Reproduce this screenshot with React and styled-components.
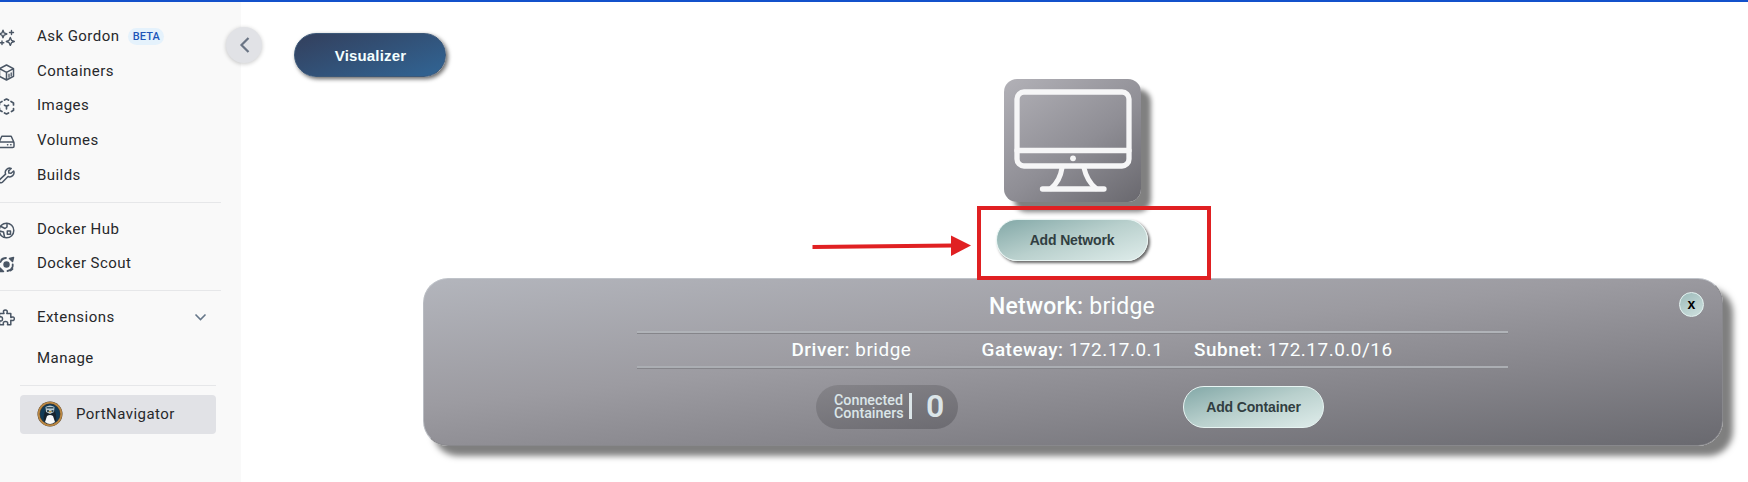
import React from "react";
import styled, { createGlobalStyle, css } from "styled-components";

const Global = createGlobalStyle`
  *, *::before, *::after { box-sizing: border-box; }
  body { margin: 0; background: #fff; font-family: Roboto, "Liberation Sans", sans-serif; overflow: hidden; }
`;

const Page = styled.div`
  height: 482px;
  display: flex;
  flex-direction: column;
  position: relative;
`;
const TopBar = styled.div`
  height: 2px;
  flex: none;
  background: #1351cb;
`;
const Body = styled.div`
  flex: 1;
  display: flex;
  min-height: 0;
`;
const Sidebar = styled.nav`
  width: 241px;
  flex: none;
  position: relative;
  background: #f9f9f9;
  padding-top: 17px;
`;
const Item = styled.div`
  height: ${(p) => p.$h || 34.6}px;
  display: flex;
  align-items: center;
  color: #27282b;
  font-size: 15px;
  letter-spacing: 0.45px;
  white-space: nowrap;
`;
const IconSlot = styled.span`
  width: 37px;
  height: 17px;
  flex: none;
  overflow: hidden;
  margin-top: 2px;
  svg { display: block; margin-left: -2px; }
`;
const Beta = styled.span`
  margin-left: 9px;
  width: 36px;
  height: 17px;
  border-radius: 9px;
  background: #e5f2fc;
  color: #2055b8;
  font-size: 11px;
  font-weight: 500;
  letter-spacing: 0.1px;
  line-height: 17px;
  text-align: center;
`;
const Divider = styled.div`
  height: 1px;
  background: #e6e7e9;
  margin: ${(p) => p.$margin};
`;
const Chevron = styled.svg`
  margin-left: auto;
  margin-right: 33px;
`;
const Extension = styled.div`
  margin: 9px 25px 0 20px;
  height: 39px;
  border-radius: 4px;
  background: #e1e2e6;
  display: flex;
  align-items: center;
  gap: 13px;
  padding: 0 0 1px 17px;
  font-size: 15px;
  letter-spacing: 0.45px;
  color: #27282b;
`;
const Collapse = styled.button`
  position: absolute;
  left: 226px;
  top: 27px;
  width: 36px;
  height: 36px;
  border: 0;
  padding: 0 0 1px 1px;
  border-radius: 50%;
  background: #e1e2e6;
  box-shadow: 0 1px 4px rgba(0, 0, 0, 0.22);
  display: flex;
  align-items: center;
  justify-content: center;
`;
const Main = styled.main`
  flex: 1;
  min-width: 0;
  display: flex;
  flex-direction: column;
  padding: 31px 25px 0 53px;
`;
const pill = css`
  display: flex;
  align-items: center;
  justify-content: center;
  padding: 0;
  font-family: "Liberation Sans", Arial, sans-serif;
  font-weight: 700;
`;
const VisualizerButton = styled.button`
  ${pill}
  width: 152px;
  height: 44px;
  flex: none;
  border: 1px solid #3c5878;
  border-radius: 22px;
  background: linear-gradient(160deg, #33415f 5%, #31618f 90%);
  box-shadow: 2px 2px 4px rgba(0, 0, 0, 0.6);
  color: #f4ffff;
  font-size: 15px;
  letter-spacing: 0.15px;
  padding: 1px 0 0 1px;
`;
const Board = styled.section`
  margin-left: 129px;
  margin-top: 2px;
  display: flex;
  flex-direction: column;
  align-items: center;
`;
const Host = styled.div`
  width: 137px;
  height: 123px;
  margin-right: 2px;
  border-radius: 13px;
  background: linear-gradient(145deg, #b2b1b7 0%, #8f8e95 55%, #69686e 100%);
  box-shadow: 10px 10px 5px #808080;
  svg { display: block; }
`;
const MintButton = styled.button`
  ${pill}
  width: ${(p) => p.$w}px;
  height: 42px;
  border: 1px solid #e8f5f3;
  border-radius: 21px;
  background: linear-gradient(163deg, #88acab 5%, #b9d0cd 50%, #d9e8e6 92%);
  color: #313e41;
  font-size: 14px;
  letter-spacing: -0.15px;
  box-shadow: ${(p) => (p.$raised ? "2px 2px 3px rgba(0,0,0,.6)" : "none")};
`;
const AddSlot = styled.div`
  padding: 17px 2px 17px 0;
`;
const NetworkCard = styled.article`
  position: relative;
  width: 1300px;
  height: 168px;
  padding-right: 2px;
  border-radius: 25px;
  border: 1px solid;
  border-color: #bfc3c9 #88888c #88888c #b9bcc2;
  background: linear-gradient(174deg, #b3b5bc 0%, #9c9ba1 42%, #87868c 67%, #69696f 100%);
  box-shadow: 10px 10px 6px #7f7f7f;
  color: #fbffff;
  display: flex;
  flex-direction: column;
  align-items: center;
`;
const Title = styled.h2`
  margin: 0;
  height: 52px;
  line-height: 56px;
  font-size: 23px;
  font-weight: 400;
  letter-spacing: 0.22px;
  b { font-weight: 500; }
`;
const Facts = styled.div`
  width: 871px;
  height: 37px;
  border-top: 2px solid #b0b3b8;
  border-bottom: 2px solid #abaeb3;
  box-shadow: 0 1px 0 #85858a, inset 0 1px 0 #85858a;
  display: flex;
  align-items: center;
  padding-left: 155px;
  font-size: 18.9px;
  letter-spacing: 0.53px;
  white-space: nowrap;
  b { font-weight: 500; }
`;
const Fact = styled.span`
  width: ${(p) => p.$w}px;
  flex: none;
`;
const Actions = styled.div`
  display: flex;
  align-items: center;
  gap: 225px;
  margin: 17px 4px 0 0;
`;
const Counter = styled.div`
  width: 142px;
  height: 44px;
  border-radius: 22px;
  background: linear-gradient(170deg, #858489, #6c6b71);
  color: #dbe5e8;
  display: flex;
  align-items: center;
  padding-left: 18px;
  font-weight: 500;
`;
const CounterLabel = styled.span`
  width: 75px;
  font-size: 14.3px;
  line-height: 13px;
  white-space: nowrap;
`;
const CounterBar = styled.span`
  width: 3px;
  height: 26px;
  background: #dbe5e8;
  margin-bottom: 3px;
`;
const CounterValue = styled.span`
  margin: 0 0 2px 14px;
  font-size: 32px;
  font-weight: 600;
  line-height: 42px;
`;
const Close = styled.button`
  ${pill}
  position: absolute;
  right: 18px;
  top: 13px;
  width: 25px;
  height: 25px;
  border: 1px solid #e4f4f2;
  border-radius: 50%;
  background: linear-gradient(150deg, #9dbbba, #cfe1df);
  color: #000;
  font-size: 14px;
  padding-bottom: 2px;
`;
const Highlight = styled.div`
  position: absolute;
  left: 977px;
  top: 206px;
  width: 234px;
  height: 74px;
  border: 4px solid #e02022;
`;
const Arrow = styled.svg`
  position: absolute;
  left: 808px;
  top: 232px;
`;

const Glyph = ({ children }) => (
  <svg width="17" height="17" viewBox="0 0 17 17" fill="none" stroke="#4a5665" strokeWidth="1.5" strokeLinejoin="round" strokeLinecap="round">{children}</svg>
);
const Sparkles = () => (
  <Glyph><path d="M5 1.200 6.100 3.900l2.700 1.100L6.100 6.100 5 8.800 3.900 6.100 1.200 5l2.700-1.100ZM12.300 8.500l1.200 2.800 2.800 1.200-2.800 1.200-1.200 2.800-1.200-2.800-2.800-1.200 2.800-1.200ZM13.500 1.500v4M11.500 3.500h4M4 12v3.500M2.200 13.700h3.600" strokeWidth="1.400" /></Glyph>
);
const Box = () => (
  <Glyph><path d="M8.500 1 15.500 4.700v7.600L8.500 16l-7-3.700V4.700ZM1.500 4.700l7 3.600 7-3.600M8.500 8.300V16" /><path d="M11 10.200v3M13.200 9v3" strokeWidth="1.300" /></Glyph>
);
const ImageGlyph = () => (
  <Glyph><path d="M6.500 2 8.500 1l2 1M13 3.500l2.500 1.400v2M15.500 10.500v1.800L13.500 13.500M10.500 15l-2 1-2-1M4 13.500l-2.500-1.200v-2M1.500 6.800V4.900L4 3.500M6.500 7.200l2 1.100 2-1.100M8.500 8.300v2.500" strokeWidth="1.700" /></Glyph>
);
const Drive = () => (
  <Glyph><path d="M1 9.500 3.800 3.200h9.400L16 9.500M2.300 9h12.400q1.300 0 1.300 1.300v2.900q0 1.300-1.300 1.300H2.300Q1 14.500 1 13.200v-2.900Q1 9 2.300 9ZM9.500 11.800h.3M12.700 11.800h.3" /></Glyph>
);
const Wrench = () => (
  <Glyph><path d="M13.200 1.500a4.300 4.300 0 0 0-5.600 5.600L1.700 12.600a1.900 1.900 0 0 0 2.700 2.700L10 9.500a4.300 4.300 0 0 0 5.700-5.500l-2.600 2.300-2.200-.2-.3-2.200Z" /></Glyph>
);
const Hub = () => (
  <Glyph><circle cx="8.500" cy="8.500" r="7.300" /><path d="M3 4.500 7 6.500 9 5V1.500M1.500 9l4 1 1 5M9.300 9h3.200v3.200H9.300Z" /></Glyph>
);
const Scout = () => (
  <Glyph><circle cx="8.500" cy="8.500" r="3.200" fill="#4a5665" stroke="none" /><path d="M8 2a6.500 6.500 0 0 0-5.500 4M9.500 15a6.500 6.500 0 0 0 5-4M14.700 8.300v2M3.500 3.500 5 2.500M12.500 14.500l2-1.500" strokeWidth="1.800" /><path d="m11.500 2.500 4-1-1 4ZM2 12v3.500h3.500Z" fill="#4a5665" /></Glyph>
);
const Puzzle = () => (
  <Glyph><path d="M1.500 4.500H6C4.700 1.800 6 1 7.300 1s2.700.8 1.500 3.500h4v4c2.700-1.300 3.500 0 3.500 1.200s-.8 2.500-3.500 1.500v4.500H9.500c.8-3-.8-3.200-2-3.200s-2.800.4-2 3.200h-4v-4c3 .8 3-.8 3-2s-.5-2.500-3-1.700Z" /></Glyph>
);
const Penguin = () => (
  <svg width="26" height="26" viewBox="0 0 26 26">
    <circle cx="13" cy="13" r="12.500" fill="#4b3a29" />
    <circle cx="13" cy="13" r="11.300" fill="none" stroke="#b98743" strokeWidth="1.800" />
    <circle cx="13" cy="13" r="10" fill="#123b56" />
    <path d="M7 20c-1-6 1-9 2-12 1-4 7-4 8 0 1 3 3 6 2 12l-6 3Z" fill="#17232d" />
    <path d="M8.500 6q4.500-3 9 0l-.5 5-4 2-4-2Z" fill="#b9c8cd" />
    <path d="M9.500 6h7v1.500h-7ZM10 9h2v2h-2ZM14.500 9h2v2h-2Z" fill="#344e5c" />
    <path d="m11.500 10 1.500 2 2-2Z" fill="#bd963e" />
    <path d="M10 15q3-2 6 0l2 6q-5 4-10 0Z" fill="#f7f9fa" />
  </svg>
);

export default function App() {
  return (
    <Page>
      <Global />
      <TopBar />
      <Body>
        <Sidebar>
          <Item $h={34.7}><IconSlot><Sparkles /></IconSlot>Ask Gordon<Beta>BETA</Beta></Item>
          <Item $h={34.7}><IconSlot><Box /></IconSlot>Containers</Item>
          <Item $h={33.8}><IconSlot><ImageGlyph /></IconSlot>Images</Item>
          <Item $h={35.8}><IconSlot><Drive /></IconSlot>Volumes</Item>
          <Item $h={34}><IconSlot><Wrench /></IconSlot>Builds</Item>
          <Divider $margin="10px 20px 9px 0" />
          <Item $h={34.3}><IconSlot><Hub /></IconSlot>Docker Hub</Item>
          <Item $h={34.3}><IconSlot><Scout /></IconSlot>Docker Scout</Item>
          <Divider $margin="9.400px 20px 9px 0" />
          <Item $h={34}>
            <IconSlot><Puzzle /></IconSlot>Extensions
            <Chevron width="15" height="10" viewBox="0 0 15 10" fill="none" stroke="#66778a" strokeWidth="1.600"><path d="m2.500 2.500 5 5 5-5" /></Chevron>
          </Item>
          <Item $h={48.5}><IconSlot />Manage</Item>
          <Divider $margin="2.500px 25px 0 20px" />
          <Extension><Penguin />PortNavigator</Extension>
        </Sidebar>
        <Main>
          <VisualizerButton>Visualizer</VisualizerButton>
          <Board>
            <Host>
              <svg width="137" height="123" viewBox="1004 79 137 123" fill="none" stroke="#f6f6f7" strokeWidth="5.300" strokeLinecap="round">
                <rect x="1017" y="92" width="112" height="74" rx="7" />
                <path d="M1017 150.500h112M1042.500 189h61.500" />
                <path d="M1062 168q-2 13-11 20.500M1084 168q3 13 12 20.500" strokeWidth="5" />
                <circle cx="1073" cy="158.300" r="2.900" fill="#f6f6f7" stroke="none" />
              </svg>
            </Host>
            <AddSlot>
              <MintButton $w={152} $raised>Add Network</MintButton>
            </AddSlot>
            <NetworkCard>
              <Title><b>Network:</b> bridge</Title>
              <Facts>
                <Fact $w={190}><b>Driver:</b> bridge</Fact>
                <Fact $w={212.5}><b>Gateway:</b> 172.17.0.1</Fact>
                <Fact $w={205}><b>Subnet:</b> 172.17.0.0/16</Fact>
              </Facts>
              <Actions>
                <Counter>
                  <CounterLabel>Connected<br />Containers</CounterLabel>
                  <CounterBar />
                  <CounterValue>0</CounterValue>
                </Counter>
                <MintButton $w={141}>Add Container</MintButton>
              </Actions>
              <Close>x</Close>
            </NetworkCard>
          </Board>
        </Main>
      </Body>
      <Collapse>
        <svg width="12" height="18" viewBox="0 0 12 18" fill="none" stroke="#6a7484" strokeWidth="2.200"><path d="m9.500 2-7 7 7 7" /></svg>
      </Collapse>
      <Highlight />
      <Arrow width="168" height="28" viewBox="808 232 168 28">
        <path d="M812.500 247 953 245.500" stroke="#e02022" strokeWidth="4" />
        <path d="M951 235.500 971 245.500 951 256Z" fill="#e02022" />
      </Arrow>
    </Page>
  );
}
